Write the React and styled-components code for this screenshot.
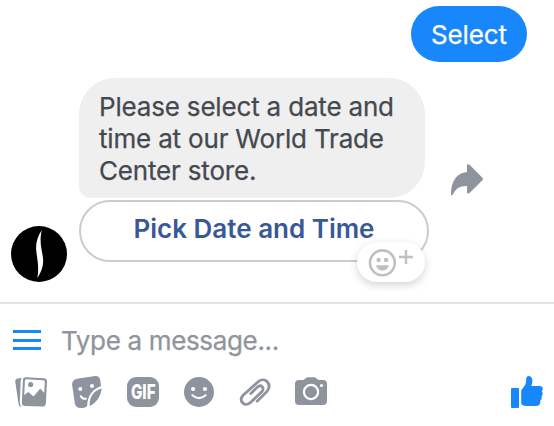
import styled, { createGlobalStyle } from "styled-components";

const GlobalStyle = createGlobalStyle`
  * {
    box-sizing: border-box;
  }

  body {
    margin: 0;
    background: #fff;
    overflow: hidden;
    font-family: Inter, "Liberation Sans", sans-serif;
    -webkit-font-smoothing: antialiased;
  }

  svg {
    display: block;
    flex-shrink: 0;
  }

  button {
    font-family: inherit;
    cursor: pointer;
  }
`

const ShareIcon = () => (
  <svg width="32" height="32" viewBox="0 0 32 32" fill="#8d949e">
    <path d="M16 1.5Q16 .3 17.2.3Q18 .3 18.8 1.1L31.4 13.8Q32.6 15 31.4 16.2L18.8 28.7Q18 29.5 17.2 29.5Q16 29.5 16 28.2V22C9 21.8 4.6 24.6 2.1 30.2Q1.5 31.5.6 31.3Q0 31.1 0 29.8C.1 17.6 5.6 8.7 16 8Z" />
  </svg>
);

const FlameIcon = () => (
  <svg width="56" height="56" viewBox="0 0 56 56" fill="#fff">
    <path d="M30.8 4C26.6 10.5 24.6 17 25.2 24C25.9 32.5 28.4 40 26.4 52C30.4 46 32.6 40 32.1 33.5C31.5 24.5 27.7 17 30.8 4Z" />
  </svg>
);

const AddReactionIcon = () => (
  <svg width="46" height="30" viewBox="0 0 46 30" fill="none" stroke="#bec0c2">
    <circle cx="14.4" cy="15.8" r="12.4" strokeWidth="2.6" />
    <circle cx="10.6" cy="13" r="2.2" fill="#bec0c2" stroke="none" />
    <circle cx="18.1" cy="13" r="2.2" fill="#bec0c2" stroke="none" />
    <path d="M8 18.2H20.8C20.2 21.4 17.6 23.6 14.4 23.6S8.6 21.4 8 18.2Z" fill="#bec0c2" stroke="none" />
    <path d="M31 10H45M38 3V17" strokeWidth="2.4" />
  </svg>
);

const PhotosIcon = () => (
  <svg width="32" height="32" viewBox="0 0 32 32" fill="#8d949e">
    <path d="M3 2.4L6.7 1.8Q5.8 3.2 5.7 5L4.8 25.5Q4.6 29 6.7 31Q4.3 31.2 3.6 28.2L.3 6Q-.1 2.9 3 2.4Z" />
    <path
      fillRule="evenodd"
      d="M10.7 1.2L28.8 2.2Q32.2 2.5 32 6L30.9 27Q30.6 30.8 27 30.6L10 30.1Q6.7 29.9 6.9 26.3L7.9 4Q8.1 1 10.7 1.2ZM11.4 3.2Q10 3.1 9.9 4.7L9.2 20.5L13.3 17.2L19 21L25.4 13.1L29.2 17.2L29.8 6Q29.9 4.3 28.2 4.2Z"
    />
    <path d="M9 21.5V19.2L13.2 15.9L18.5 20.5L25.1 12.7L30 17.8L29 21.5Z" />
    <circle cx="15.6" cy="8.5" r="2.6" />
  </svg>
);

const StickerIcon = () => (
  <svg width="32" height="32" viewBox="0 0 32 32" fill="#8d949e">
    <path d="M6 2.7L24 0Q28.5-.2 29.3 4.3L30 10.2C22.5 12.5 16.5 18.8 16.2 29.5Q15.8 31.2 13.2 31.7C8.2 32.4 5.2 32 3.9 27.4L1.2 9.6Q.5 3.8 6 2.7Z" />
    <path d="M30.7 12.4C29.8 20 25.6 26.7 18.6 29.9C18.1 20.5 23.1 14.2 30.7 12.4Z" />
    <circle cx="9.3" cy="13" r="2" fill="#fff" />
    <circle cx="21" cy="10" r="2" fill="#fff" />
    <path d="M9.8 20.1Q11.2 23.2 14.8 22.8" fill="none" stroke="#fff" strokeWidth="2" strokeLinecap="round" />
  </svg>
);

const SmileyIcon = () => (
  <svg width="32" height="32" viewBox="0 0 32 32">
    <circle cx="16" cy="16" r="15" fill="#8d949e" />
    <circle cx="10.1" cy="13" r="2.1" fill="#fff" />
    <circle cx="21.9" cy="13" r="2.1" fill="#fff" />
    <path d="M9.4 19.3Q16 25 22.6 19.3" fill="none" stroke="#fff" strokeWidth="2.1" strokeLinecap="round" />
  </svg>
);

const ClipIcon = () => (
  <svg width="32" height="32" viewBox="0 0 32 32" fill="none" stroke="#8d949e" strokeWidth="2.8" strokeLinecap="round" strokeLinejoin="round">
    <path d="M18.1 25.2L28.1 15.2C33.2 8.8 26.6.4 19.8 5.2L4.1 19.2C-.7 24.6 5.2 31.2 10.7 27.2L22.7 15.8C26 11.6 22.2 8 18.4 11.1L11.8 17.5" />
  </svg>
);

const CameraIcon = () => (
  <svg width="32" height="32" viewBox="0 0 32 32" fill="#8d949e">
    <path d="M4 4H8Q9.1 4 10 2.8Q11.3 1.2 13 1.2H19Q20.7 1.2 22 2.8Q22.9 4 24 4H28Q32 4 32 8V25Q32 29 28 29H4Q0 29 0 25V8Q0 4 4 4Z" />
    <circle cx="16" cy="16" r="7.1" fill="none" stroke="#fff" strokeWidth="2.2" />
    <circle cx="26.5" cy="9.5" r="1.6" fill="#fff" />
  </svg>
);

const ThumbIcon = () => (
  <svg width="32" height="32" viewBox="0 0 32 32" fill="#1787fb">
    <rect x="0" y="12" width="8" height="20" rx="1" />
    <path d="M10.2 14.8Q10.3 13.2 12 11.9C15 9.3 15.2 5.9 15.2 3.1Q15.2 0 17.8 0C21.8.4 22.2 5 20.4 10H28.5Q31.8 10 31.8 13Q31.7 14.4 30.8 15.2Q32.7 18 30.6 20.3Q31.4 22.9 29.3 24.7Q29.9 30 24.8 30H15.5Q10.2 30 10.2 26.8Z" />
  </svg>
);

const App = () => {
  return (
    <Messenger>
      <GlobalStyle />
      <Conversation>
        <SentRow>
          <SentBubble>Select</SentBubble>
        </SentRow>
        <ReceivedRow>
          <Avatar>
            <FlameIcon />
          </Avatar>
          <MessageGroup>
            <ReceivedBubble>
              Please select a date and<br />
              time at our World Trade<br />
              Center store.
            </ReceivedBubble>
            <PickButton>Pick Date and Time</PickButton>
            <ReactionBadge>
              <AddReactionIcon />
            </ReactionBadge>
          </MessageGroup>
          <ShareButton aria-label="Share">
            <ShareIcon />
          </ShareButton>
        </ReceivedRow>
      </Conversation>
      <Composer>
        <InputRow>
          <Menu>
            <MenuLine />
            <MenuLine />
            <MenuLine />
          </Menu>
          <Placeholder>Type a message...</Placeholder>
        </InputRow>
        <Toolbar>
          <PhotosIcon />
          <StickerIcon />
          <GifBadge>
            <GifLabel>GIF</GifLabel>
          </GifBadge>
          <SmileyIcon />
          <ClipIcon />
          <CameraIcon />
          <LikeButton aria-label="Like">
            <ThumbIcon />
          </LikeButton>
        </Toolbar>
      </Composer>
    </Messenger>
  )
};

const Messenger = styled.div`
width: 554px;
height: 426px;
display: flex;
flex-direction: column;
background: #fff;
`

const Conversation = styled.div`
height: 302px;
padding-top: 6px;
`

const SentRow = styled.div`
display: flex;
justify-content: flex-end;
padding-right: 27px;
`

const SentBubble = styled.div`
width: 116px;
height: 56px;
border-radius: 28px;
background: #1787fb;
color: #fff;
font-size: 26px;
line-height: 58px;
text-align: center;
letter-spacing: -0.1px;
-webkit-text-stroke: 0.25px #fff;
`

const ReceivedRow = styled.div`
display: flex;
align-items: flex-start;
margin-top: 16px;
padding-left: 11px;
`

const Avatar = styled.div`
width: 56px;
height: 56px;
margin-top: 148px;
border-radius: 50%;
background: #000;
overflow: hidden;
`

const MessageGroup = styled.div`
position: relative;
width: 350px;
margin-left: 12px;
`

const ReceivedBubble = styled.div`
width: 346px;
height: 120px;
padding: 13px 0 0 20px;
border-radius: 36px 36px 36px 12px;
background: #efefef;
color: #444950;
font-size: 26px;
line-height: 32px;
white-space: nowrap;
letter-spacing: -0.18px;
-webkit-text-stroke: 0.25px #444950;
`

const PickButton = styled.button`
display: block;
width: 350px;
height: 62px;
margin-top: 2px;
padding: 0 0 6px;
border: 2px solid #ccc;
border-radius: 31px;
background: #fff;
color: #385898;
font-size: 26px;
font-weight: 600;
white-space: nowrap;
`

const ReactionBadge = styled.div`
position: absolute;
left: 278px;
top: 164px;
width: 68px;
height: 40px;
padding: 5px 0 0 11px;
border-radius: 20px;
background: #fff;
box-shadow: 0 3px 8px rgba(0, 0, 0, 0.17);
`

const ShareButton = styled.button`
margin: 86px 0 0 22px;
padding: 0;
border: 0;
background: none;
`

const Composer = styled.div`
height: 124px;
border-top: 2px solid #e4e4e4;
`

const InputRow = styled.div`
display: flex;
align-items: center;
height: 72px;
padding-left: 13px;
`

const Menu = styled.div`
display: flex;
flex-direction: column;
gap: 5.5px;
width: 28px;
`

const MenuLine = styled.span`
height: 3px;
background: #1787fb;
`

const Placeholder = styled.span`
margin-left: 20px;
padding-top: 2px;
color: #90949c;
font-size: 26px;
line-height: 32px;
white-space: nowrap;
letter-spacing: -0.34px;
-webkit-text-stroke: 0.25px #90949c;
`

const Toolbar = styled.div`
display: flex;
gap: 24px;
padding: 0 11px 0 15px;
`

const GifBadge = styled.div`
display: flex;
align-items: center;
justify-content: center;
width: 32px;
height: 30px;
margin-top: 1px;
border-radius: 9px;
background: #8d949e;
`

const GifLabel = styled.span`
color: #fff;
font-size: 20px;
font-weight: 800;
line-height: 30px;
transform: scaleX(0.76);
`

const LikeButton = styled.button`
margin-left: auto;
padding: 0;
border: 0;
background: none;
`

export default App;
